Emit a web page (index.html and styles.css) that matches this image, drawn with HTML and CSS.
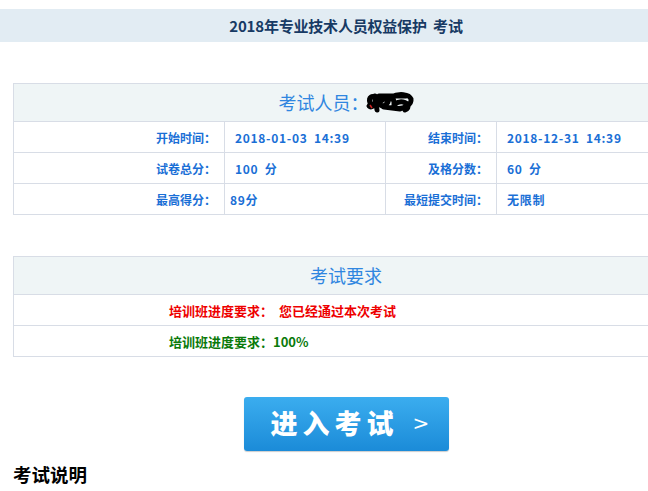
FILE: index.html
```html
<!DOCTYPE html>
<html lang="zh-CN">
<head>
<meta charset="utf-8">
<title>2018年专业技术人员权益保护 考试</title>
<link rel="stylesheet" href="styles.css">
</head>
<body>
<div class="page">
  <div class="topbar"><span class="title">2018年专业技术人员权益保护&nbsp;&nbsp;考试</span></div>

  <table class="grid info">
    <colgroup><col class="c1"><col class="c2"><col class="c3"><col class="c4"></colgroup>
    <tr class="head"><th colspan="4"><span class="head-text">考试人员：</span><svg class="scribble" width="50" height="24" viewBox="0 0 50 24"><path d="M5 13 C3 7 8 5 10 8 C11 14 7 19 4 16 M10 6 L12 20 M14 10 C20 4 26 6 23 12 C19 18 13 17 16 11 C22 6 30 7 29 14 M26 7 C34 3 44 4 46 9 C47 15 38 20 30 18 C26 16 32 11 38 12 C43 13 45 18 40 20 M19 17 L35 19 M14 6 L41 6" fill="none" stroke="#000" stroke-width="5" stroke-linecap="round" stroke-linejoin="round"/><path d="M5 15 L7 18" stroke="#c22" stroke-width="1.5"/></svg></th></tr>
    <tr>
      <td class="label">开始时间：</td><td class="value">2018-01-03 14:39</td>
      <td class="label">结束时间：</td><td class="value">2018-12-31 14:39</td>
    </tr>
    <tr>
      <td class="label">试卷总分：</td><td class="value">100 分</td>
      <td class="label">及格分数：</td><td class="value">60 分</td>
    </tr>
    <tr>
      <td class="label">最高得分：</td><td class="value tight">89分</td>
      <td class="label">最短提交时间：</td><td class="value">无限制</td>
    </tr>
  </table>

  <table class="grid req">
    <tr class="head"><th><span class="head-text">考试要求</span></th></tr>
    <tr><td class="req-cell red">培训班进度要求：&nbsp;&nbsp;您已经通过本次考试</td></tr>
    <tr><td class="req-cell green">培训班进度要求：100%</td></tr>
  </table>

  <div class="btn-row"><a class="enter-btn" href="#">进入考试<span class="arrow">&gt;</span></a></div>

  <h3 class="section">考试说明</h3>
</div>
</body>
</html>
```

FILE: styles.css
```css
html, body {
  margin: 0;
  padding: 0;
  background: #fff;
  overflow: hidden;
}
body {
  font-family: "Noto Sans CJK SC", "Liberation Sans", sans-serif;
  width: 648px;
  height: 491px;
}
.page {
  width: 692px;
  padding-top: 9px;
}
.topbar {
  height: 33px;
  background: #e2ecf3;
  display: flex;
  align-items: center;
  justify-content: center;
}
.title {
  font-size: 15px;
  font-weight: bold;
  color: #173a64;
  white-space: nowrap;
  letter-spacing: -0.2px;
}
.grid {
  border-collapse: collapse;
  table-layout: fixed;
  width: 666px;
  margin-left: 13px;
  margin-top: 41px;
}
.grid th, .grid td {
  border: 1px solid #d8dde6;
  padding: 0;
}
.c1 { width: 211px; }
.c2 { width: 161px; }
.c3 { width: 111px; }
.c4 { width: 183px; }
.head th {
  background: #eff5f6;
  height: 34px;
  padding-bottom: 3px;
  font-weight: normal;
  text-align: center;
}
.head-text {
  font-size: 18px;
  color: #2f86e0;
  vertical-align: middle;
}
.scribble {
  vertical-align: middle;
  margin-left: -4px;
}
.info td {
  height: 30px;
  font-size: 12px;
  font-weight: bold;
  color: #1a6fd6;
  white-space: nowrap;
}
.label {
  text-align: right;
  padding-right: 8px !important;
}
.value {
  padding-left: 10px !important;
  letter-spacing: 0.7px;
  word-spacing: 3px;
}
.value.tight {
  padding-left: 5px !important;
}
.req-cell {
  height: 30px;
  font-size: 13px;
  font-weight: bold;
  padding-left: 155px !important;
  white-space: nowrap;
}
.red { color: #ee0000; }
.green { color: #0a7a0a; }
.btn-row {
  margin-top: 40px;
  display: flex;
  justify-content: center;
}
.enter-btn {
  display: flex;
  align-items: center;
  width: 205px;
  height: 54px;
  box-sizing: border-box;
  padding-left: 27px;
  padding-bottom: 3px;
  border-radius: 3px;
  background: linear-gradient(#3badef, #1b8bd8);
  box-shadow: 0 1px 1px rgba(0,0,0,0.2);
  color: #fff;
  text-decoration: none;
  font-family: "Noto Sans CJK SC", sans-serif;
  font-size: 27px;
  font-weight: 900;
  letter-spacing: 5px;
}
.arrow {
  font-family: "DejaVu Sans", sans-serif;
  font-weight: normal;
  font-size: 20px;
  margin-left: 14px;
}
.section {
  margin: 10px 0 0 13px;
  font-size: 18.5px;
  font-weight: bold;
  color: #000;
}
```
